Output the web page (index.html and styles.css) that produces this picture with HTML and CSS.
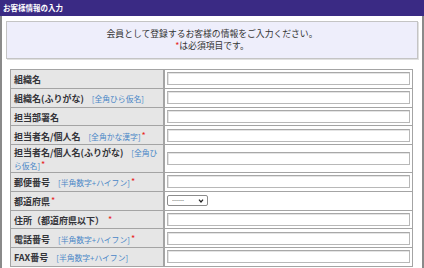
FILE: index.html
```html
<!DOCTYPE html>
<html>
<head>
  <meta charset="utf-8">
  <title>お客様情報の入力</title>
  <link rel="stylesheet" href="styles.css">
</head>
<body>
  <div class="section-title">お客様情報の入力</div>

  <div class="panel">
    <!-- Intro message -->
    <div class="intro">
      <p>会員として登録するお客様の情報をご入力ください。</p>
      <p><span class="mark">*</span>は必須項目です。</p>
    </div>

    <!-- Customer form -->
    <table class="form-table">
      <tr>
        <th>組織名</th>
        <td><input type="text"></td>
      </tr>
      <tr>
        <th>組織名(ふりがな)<span class="hint">[全角ひら仮名]</span></th>
        <td><input type="text"></td>
      </tr>
      <tr>
        <th>担当部署名</th>
        <td><input type="text"></td>
      </tr>
      <tr>
        <th>担当者名/個人名<span class="hint">[全角かな漢字]</span><span class="req">*</span></th>
        <td><input type="text"></td>
      </tr>
      <tr>
        <th class="wrap">担当者名/個人名(ふりがな)<span class="hint">[全角ひら仮名]</span><span class="req">*</span></th>
        <td><input type="text"></td>
      </tr>
      <tr>
        <th>郵便番号<span class="hint">[半角数字+ハイフン]</span><span class="req">*</span></th>
        <td><input type="text"></td>
      </tr>
      <tr>
        <th>都道府県<span class="req">*</span></th>
        <td>
          <div class="select-wrap">
            <select class="pref">
              <option>------</option>
            </select>
            <svg class="select-arrow" viewBox="0 0 8 6" width="6" height="4">
              <path d="M1 1 L4 4.5 L7 1" fill="none" stroke="#222" stroke-width="1.8"/>
            </svg>
          </div>
        </td>
      </tr>
      <tr>
        <th>住所（都道府県以下）<span class="req sp">*</span></th>
        <td><input type="text"></td>
      </tr>
      <tr>
        <th>電話番号<span class="hint">[半角数字+ハイフン]</span><span class="req">*</span></th>
        <td><input type="text"></td>
      </tr>
      <tr>
        <th>FAX番号<span class="hint">[半角数字+ハイフン]</span></th>
        <td><input type="text"></td>
      </tr>
    </table>
  </div>
</body>
</html>
```

FILE: styles.css
```css
body {
  margin: 0;
  font-family: "Noto Sans CJK JP", "Noto Sans", sans-serif;
  color: #333;
  background-color: #fff;
}
.section-title {
  height: 16px;
  line-height: 16px;
  padding-left: 3px;
  background-color: #3a2a84;
  color: #fff;
  font-size: 7.5px;
  font-weight: bold;
}
.panel {
  border-left: 2px solid #8a8a8a;
  border-right: 2px solid #8a8a8a;
  padding: 5px 4px 10px 4px;
}
.intro {
  background-color: #eeeefb;
  border: 1px solid #c4c4c4;
  box-shadow: 1px 1px 0 #e0e0e0;
  padding: 6px 0 6px;
  text-align: center;
  font-size: 8.8px;
  line-height: 12px;
}
.intro p {
  margin: 0;
}
.mark {
  color: #e8241c;
}
.req {
  color: #e8241c;
  font-weight: normal;
  margin-left: 1px;
  position: relative;
  top: -1px;
}
.req.sp {
  margin-left: 4px;
}
.form-table {
  margin: 10px 0 0 4px;
  width: 403px;
  border-collapse: collapse;
}
.form-table th,
.form-table td {
  border: 1px solid #a4a4a4;
  padding: 1.5px 2px;
  height: 14.75px;
}
.form-table th {
  width: 150px;
  background-color: #e6e6e6;
  border-right: 2px solid #a4a4a4;
  text-align: left;
  font-size: 9px;
  line-height: 13px;
  font-weight: bold;
  color: #333338;
  padding: 2.5px 2px 0.5px 3px;
}
.form-table th.wrap {
  padding-top: 0.5px;
}
.form-table td {
  background-color: #fff;
}
.hint {
  margin-left: 8px;
  color: #4a86c6;
  font-size: 7.8px;
  font-weight: normal;
}
.form-table input {
  display: block;
  box-sizing: border-box;
  width: 243px;
  height: 13px;
  margin: 0;
  padding: 0 2px;
  border: 1px solid #b8b8b8;
  border-top-color: #a8a8a8;
  box-shadow: inset 1px 1px 0 #e4e4e4;
  font-size: 8px;
}
.select-wrap {
  position: relative;
  width: 41px;
  height: 11px;
}
.pref {
  display: block;
  box-sizing: border-box;
  width: 41px;
  height: 11px;
  margin: 0;
  padding: 0 0 0 4px;
  -webkit-appearance: none;
  appearance: none;
  font-family: "Liberation Sans", Arial, sans-serif;
  font-size: 6px;
  line-height: 9px;
  color: #333;
  border: 1px solid #8c8c8c;
  border-radius: 2px;
  background-color: #fff;
}
.select-arrow {
  position: absolute;
  right: 4px;
  top: 4px;
  pointer-events: none;
}
```
